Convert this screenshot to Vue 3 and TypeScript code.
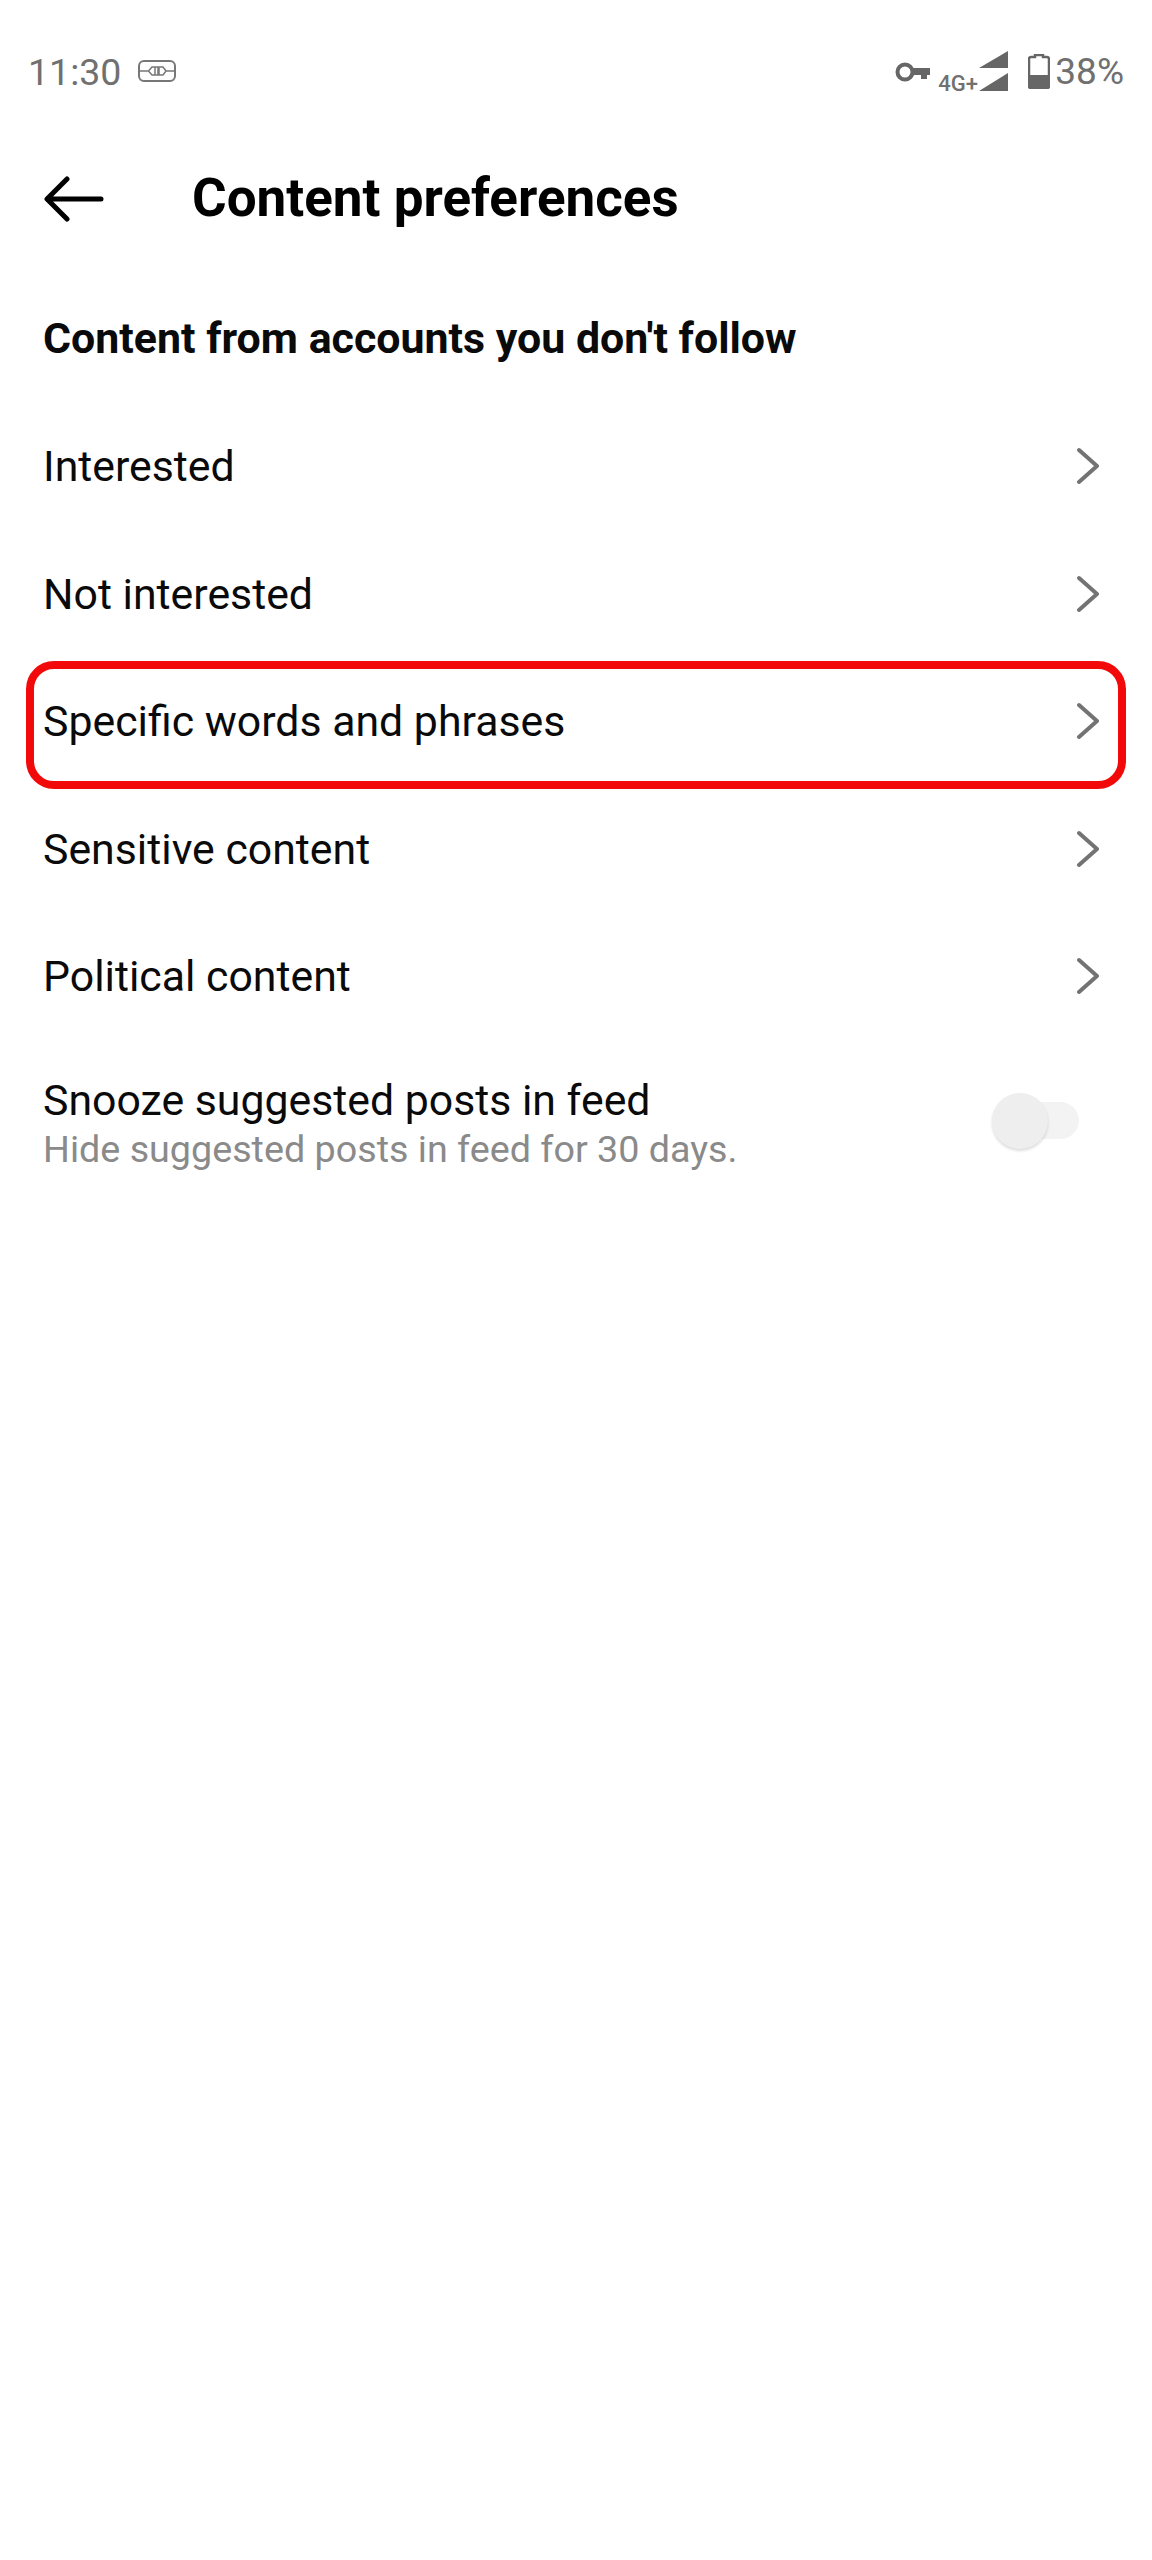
<script setup lang="ts">
const rows: string[] = ['Interested', 'Not interested', 'Specific words and phrases', 'Sensitive content', 'Political content']
const highlighted = 'Specific words and phrases'
</script>

<template>
  <div class="screen">
    <div class="status">
      <div class="status-left">
        <span class="time">11:30</span>
        <svg class="plug" viewBox="0 0 38 22" width="38" height="22" fill="none" stroke="#777" stroke-width="2">
          <rect x="1" y="1" width="36" height="20" rx="5" />
          <path d="M1 11H10M28 11H37M20 7H14L10.500 11L14 15H20ZM17 7V15M21 7H25L28 11L25 15H21Z" stroke-width="1.500" />
        </svg>
      </div>
      <div class="status-right">
        <svg class="key" viewBox="0 0 36 21" width="36" height="21" fill="none" stroke="#666">
          <circle cx="10" cy="10" r="7.500" stroke-width="4" />
          <path d="M17 6H35V13H32V17H26V13H17Z" fill="#666" stroke="none" />
        </svg>
        <span class="net">4G+</span>
        <svg class="signal" viewBox="0 0 31 40" width="31" height="40" fill="#666">
          <path d="M1 17L30 0V17Z" />
          <path d="M1 40L30 22V40Z" />
        </svg>
        <svg class="battery" viewBox="0 0 22 35" width="22" height="35">
          <path d="M7 1H15V3H19A2 2 0 0 1 21 5V32A2 2 0 0 1 19 34H3A2 2 0 0 1 1 32V5A2 2 0 0 1 3 3H7Z" fill="none" stroke="#666" stroke-width="2.500" />
          <path d="M1 21H21V32A2 2 0 0 1 19 34H3A2 2 0 0 1 1 32Z" fill="#666" />
        </svg>
        <span class="pct">38%</span>
      </div>
    </div>

    <div class="header">
      <svg class="back" viewBox="0 0 60 46" width="60" height="46" fill="none" stroke="#000" stroke-width="5" stroke-linecap="round" stroke-linejoin="round">
        <path d="M57 23H4M23 3L3 23L23 43" />
      </svg>
      <h1 class="title">Content preferences</h1>
    </div>

    <h2 class="section">Content from accounts you don't follow</h2>

    <div class="list">
      <div v-for="row in rows" :key="row" class="row" :class="{ marked: row === highlighted }">
        <span class="label">{{ row }}</span>
        <svg class="chev" viewBox="0 0 22 38" width="22" height="38" fill="none" stroke="#737373" stroke-width="4" stroke-linecap="round" stroke-linejoin="round">
          <path d="M2 3L20 19L2 35" />
        </svg>
      </div>
      <div class="row toggle-row">
        <div class="toggle-text">
          <span class="label">Snooze suggested posts in feed</span>
          <span class="sub">Hide suggested posts in feed for 30 days.</span>
        </div>
        <div class="switch"><span class="knob"></span></div>
      </div>
    </div>
  </div>
</template>

<style>
html, body { margin: 0; background: #fff; }
</style>

<style scoped>
.screen {
  width: 1152px;
  height: 2560px;
  background: #fff;
  overflow: hidden;
  font-family: Roboto, "Liberation Sans", sans-serif;
  color: #0a0a0a;
}
.status {
  height: 164px;
  box-sizing: border-box;
  padding: 50px 28px 0 28px;
  display: flex;
  justify-content: space-between;
  align-items: flex-start;
  color: #707070;
}
.status-left { display: flex; align-items: center; gap: 17px; }
.time { font-size: 37.500px; line-height: 44px; }
.plug { display: block; margin-top: -2px; }
.status-right { display: flex; align-items: flex-start; height: 44px; }
.key { display: block; margin-top: 12px; margin-right: 7px; }
.net { font-size: 22px; font-weight: 500; line-height: 24px; margin-top: 22px; width: 40px; }
.signal { display: block; margin-top: 1px; margin-right: 19px; }
.battery { display: block; margin-top: 4px; margin-right: 5px; }
.pct { font-size: 37px; line-height: 44px; }
.header {
  display: flex;
  align-items: center;
  height: 68px;
  padding-left: 44px;
}
.back { display: block; flex: none; margin-top: 2px; }
.title {
  margin: 0 0 0 88px;
  font-size: 53px;
  font-weight: 700;
  line-height: 68px;
  color: #000;
}
.section {
  margin: 74px 0 0;
  padding: 0 43px;
  font-size: 42.900px;
  line-height: 64px;
  font-weight: 700;
  color: #0a0a0a;
}
.list { margin-top: 32.500px; }
.row {
  position: relative;
  height: 127.500px;
  box-sizing: border-box;
  padding: 0 53px 0 43px;
  display: flex;
  align-items: center;
  justify-content: space-between;
}
.label { font-size: 42.800px; line-height: 48px; }
.chev { display: block; }
.marked::after {
  content: "";
  position: absolute;
  left: 26px;
  right: 26px;
  top: 3px;
  bottom: -4px;
  border: 8px solid #f20a0a;
  border-radius: 28px;
  box-sizing: border-box;
}
.toggle-row { margin-top: 19.500px; }
.toggle-text { display: flex; flex-direction: column; }
.sub { font-size: 37.700px; line-height: 44px; margin-top: 3px; color: #8a8a8a; }
.switch {
  position: relative;
  width: 74px;
  height: 37px;
  margin-right: 20px;
  margin-bottom: 6px;
  border-radius: 19px;
  background: #f3f3f3;
}
.knob {
  position: absolute;
  left: -13px;
  top: -9px;
  width: 56px;
  height: 56px;
  border-radius: 50%;
  background: #eeeeee;
  box-shadow: 0 2px 3px rgba(0, 0, 0, 0.14);
}
</style>
